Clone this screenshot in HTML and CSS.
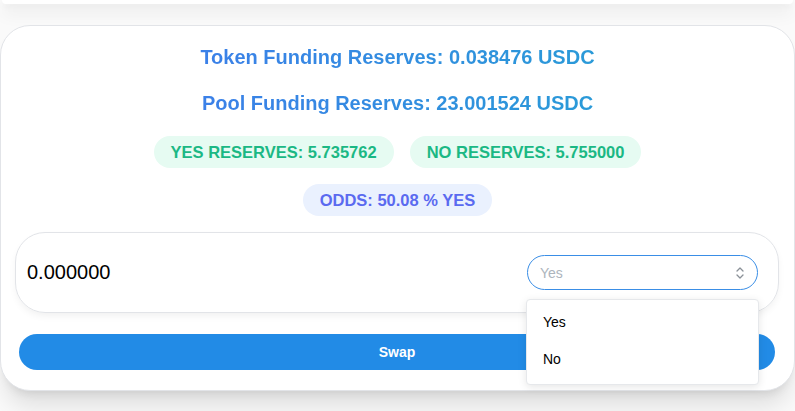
FILE: index.html
```html
<!DOCTYPE html>
<html lang="en">
<head>
<meta charset="utf-8">
<title>Swap</title>
<link rel="stylesheet" href="styles.css">
</head>
<body>
<div class="prev-card"></div>
<main class="card">
  <h2 class="reserve"><span class="grad">Token Funding Reserves: 0.038476 USDC</span></h2>
  <h2 class="reserve second"><span class="grad">Pool Funding Reserves: 23.001524 USDC</span></h2>
  <div class="pill-row">
    <span class="pill green">YES RESERVES: 5.735762</span>
    <span class="pill green">NO RESERVES: 5.755000</span>
  </div>
  <div class="pill-row odds-row">
    <span class="pill blue">ODDS: 50.08 % YES</span>
  </div>
  <div class="input-card">
    <div class="amount">0.000000</div>
    <div class="select-wrap">
      <div class="select">
        <span class="placeholder">Yes</span>
        <svg class="chev" width="12" height="16" viewBox="0 0 12 16" fill="none" stroke="#8a9097" stroke-width="1.3" stroke-linecap="round" stroke-linejoin="round"><path d="M3 6 L6 3 L9 6"/><path d="M3 10 L6 13 L9 10"/></svg>
      </div>
      <ul class="dropdown">
        <li>Yes</li>
        <li>No</li>
      </ul>
    </div>
  </div>
  <button class="swap">Swap</button>
</main>
</body>
</html>
```
FILE: styles.css
```css
* { box-sizing: border-box; }
html, body { margin: 0; padding: 0; }
body {
  background: #fafafa;
  font-family: "Liberation Sans", Arial, sans-serif;
  width: 795px;
  height: 411px;
  overflow: hidden;
}
.prev-card {
  height: 4px;
  background: #fff;
  border-radius: 0 0 30px 30px;
  box-shadow: 0 8px 16px 0 rgba(0,0,0,0.13), 0 3px 6px -1px rgba(0,0,0,0.10);
  margin: 0 2px;
}
.card {
  margin-top: 21px;
  background: #fff;
  border: 1px solid #e2e4e8;
  border-radius: 30px;
  box-shadow: 0 20px 25px -5px rgba(0,0,0,0.11), 0 8px 10px -6px rgba(0,0,0,0.10);
  padding: 17px 14px 20px 14px;
  display: flex;
  flex-direction: column;
}
.reserve {
  margin: 0;
  text-align: center;
  font-size: 20px;
  line-height: 28px;
  font-weight: 700;
}
.reserve.second { margin-top: 18px; }
.grad {
  background: linear-gradient(90deg, #3b80e8, #2a9ad8);
  -webkit-background-clip: text;
  background-clip: text;
  color: transparent;
}
.pill-row {
  margin-top: 19px;
  display: flex;
  justify-content: center;
  gap: 16px;
}
.odds-row { margin-top: 16px; }
.pill {
  display: inline-block;
  height: 32px;
  line-height: 32px;
  padding: 0 17px;
  border-radius: 16px;
  font-size: 16.5px;
  font-weight: 700;
}
.pill.green { background: #e6fbf2; color: #1bb884; }
.pill.blue { background: #eaf1fe; color: #5a6af0; }
.input-card {
  margin-top: 16px;
  height: 81px;
  border: 1px solid #e2e4e8;
  border-radius: 30px;
  box-shadow: 0 4px 8px -2px rgba(0,0,0,0.07);
  display: flex;
  align-items: center;
  justify-content: space-between;
  padding: 0 20px 0 11px;
  margin-right: 1px;
}
.amount {
  font-size: 20px;
  color: #000;
}
.select-wrap { position: relative; }
.select {
  width: 231px;
  height: 35px;
  border: 1px solid #3a8ee6;
  border-radius: 18px;
  display: flex;
  align-items: center;
  justify-content: space-between;
  padding: 0 11px 0 12px;
  font-size: 14px;
}
.placeholder { color: #adb5bd; }
.chev { display: block; }
.dropdown {
  position: absolute;
  top: 44px;
  left: -1px;
  width: 233px;
  margin: 0;
  padding: 4px 4px 6px 4px;
  list-style: none;
  background: #fff;
  border: 1px solid #e6e8eb;
  border-radius: 4px;
  box-shadow: 0 2px 8px rgba(0,0,0,0.10);
  z-index: 5;
}
.dropdown li {
  height: 37px;
  line-height: 37px;
  padding: 0 12px;
  font-size: 14px;
  color: #000;
}
.swap {
  margin: 21px 5px 0 4px;
  height: 36px;
  border: none;
  border-radius: 18px;
  background: #228be6;
  color: #fff;
  font-family: "Liberation Sans", Arial, sans-serif;
  font-size: 14px;
  font-weight: 700;
}
```
